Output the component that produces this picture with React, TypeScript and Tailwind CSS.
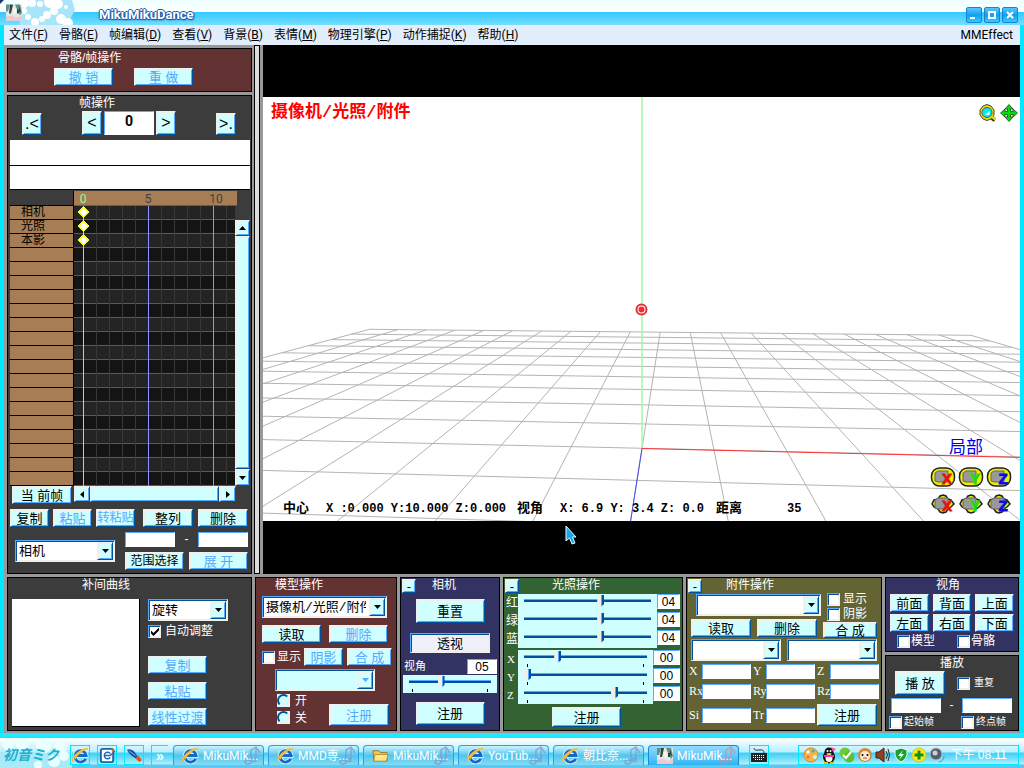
import React, { useId } from 'react';
import clsx from 'clsx';

const bevel =
  'border border-t-[#f0f0f0] border-l-[#f0f0f0] border-r-[#00509c] border-b-[#00509c] bg-[#cfffff] shadow-[inset_1px_1px_0_#efefe8,inset_-1px_-1px_0_#55a9ff]';
const sunken =
  'border border-t-[#55a9ff] border-l-[#55a9ff] border-r-[#f0f0e8] border-b-[#f0f0e8] shadow-[inset_1px_1px_0_#00509c,inset_-1px_-1px_0_#f0f0e8]';

function Btn({
  children,
  className = 'w-[59px] h-[18px]',
  textClass = 'text-[13px]',
  disabled,
  label,
}: {
  children: React.ReactNode;
  className?: string;
  textClass?: string;
  disabled?: boolean;
  label?: string;
}) {
  return (
    <button
      disabled={disabled}
      aria-label={label}
      className={clsx(
        'flex shrink-0 items-center justify-center whitespace-nowrap leading-none',
        bevel,
        disabled ? 'text-[#55a9ff]' : 'text-black',
        textClass,
        className,
      )}
    >
      {children}
    </button>
  );
}

function Field({ label, value = '', className = 'w-[50px]' }: { label: string; value?: string; className?: string }) {
  return (
    <input
      aria-label={label}
      defaultValue={value}
      className={clsx(
        'h-[15px] shrink-0 border border-t-[#55a9ff] border-l-[#55a9ff] border-r-white border-b-white bg-white text-center text-xs leading-none text-black',
        className,
      )}
    />
  );
}

function Select({
  label,
  options = [''],
  className,
  disabled,
}: {
  label: string;
  options?: string[];
  className: string;
  disabled?: boolean;
}) {
  return (
    <div className={clsx('relative h-[22px] shrink-0', className)}>
      <select
        aria-label={label}
        disabled={disabled}
        className={clsx(
          'h-full w-full appearance-none pr-5 pl-[3px] font-[Liberation_Mono,Noto_Sans_CJK_SC,monospace] text-[13px] leading-none text-black',
          sunken,
          disabled ? 'bg-[#cfffff]' : 'bg-white',
        )}
      >
        {options.map((o) => (
          <option key={o}>{o}</option>
        ))}
      </select>
      <span className={clsx('pointer-events-none absolute top-[2px] right-[2px] bottom-[2px] flex w-4 items-center justify-center', bevel)}>
        <svg width="7" height="4" viewBox="0 0 7 4">
          <path d="M0 0h7L3.500 4z" fill={disabled ? '#55a9ff' : '#000'} />
        </svg>
      </span>
    </div>
  );
}

function Check({
  label,
  checked,
  gap = 'gap-px',
  small,
}: {
  label: string;
  checked?: boolean;
  gap?: string;
  small?: boolean;
}) {
  const id = useId();
  return (
    <div className={clsx('flex h-[14px] shrink-0 items-center', gap)}>
      <span className="relative flex size-[13px] shrink-0">
        <input id={id} type="checkbox" defaultChecked={checked} className={clsx('peer size-[13px] appearance-none bg-white', sunken)} />
        <svg viewBox="0 0 13 13" className="pointer-events-none absolute inset-0 hidden peer-checked:block">
          <path d="M3 5.5v3L5.5 11 11 5.500v-3L5.500 8z" fill="#000" />
        </svg>
      </span>
      <label htmlFor={id} className={clsx('whitespace-nowrap leading-[14px]', small ? 'text-[10px]' : 'text-xs')}>
        {label}
      </label>
    </div>
  );
}

function Radio({ label }: { label: string }) {
  const id = useId();
  return (
    <div className="flex h-[17px] items-center gap-[5px]">
      <span className="flex size-[13px] bg-[#cfffff]">
        <input
          id={id}
          type="radio"
          name="display"
          className="size-[13px] appearance-none rounded-full border-2 border-t-[#00509c] border-l-[#00509c] border-r-[#f0f0e8] border-b-[#f0f0e8]"
        />
      </span>
      <label htmlFor={id} className="text-xs leading-[14px]">{label}</label>
    </div>
  );
}

function Range({ label, value, ticks }: { label: string; value: number; ticks?: boolean }) {
  return (
    <div className="flex h-[18px] min-w-0 flex-1 flex-col bg-[#cfffff] px-[6px]">
      <input
        type="range"
        aria-label={label}
        defaultValue={value}
        className="h-[14px] w-full appearance-none bg-[linear-gradient(transparent_5px,#55a9ff_5px,#55a9ff_6px,#00509c_6px,#00509c_8px,transparent_8px)] [&::-webkit-slider-thumb]:h-[12px] [&::-webkit-slider-thumb]:w-[7px] [&::-webkit-slider-thumb]:appearance-none [&::-webkit-slider-thumb]:bg-[linear-gradient(90deg,#efefe8_4px,#55a9ff_4px,#55a9ff_5px,#00509c_5px)] [&::-webkit-slider-thumb]:[clip-path:polygon(0_0,100%_0,100%_75%,50%_100%,0_75%)]"
      />
      {ticks && (
        <span className="flex justify-between px-[3px]">
          <i className="h-[3px] w-px bg-black" />
          <i className="h-[3px] w-px bg-black" />
        </span>
      )}
    </div>
  );
}

function Panel({
  title,
  titleClass = 'text-center',
  className,
  collapsible,
  children,
}: {
  title: string;
  titleClass?: string;
  className: string;
  collapsible?: boolean;
  children: React.ReactNode;
}) {
  return (
    <section className={clsx('relative flex min-w-0 flex-col border border-black text-white', className)}>
      {collapsible && (
        <div className="absolute top-px left-px">
          <Btn label={`${title} -`} className="size-[14px]">-</Btn>
        </div>
      )}
      <h2 className={clsx('h-[15px] text-xs leading-[14px]', titleClass)}>{title}</h2>
      {children}
    </section>
  );
}

const menus = [
  ['文件', 'F'], ['骨骼', 'E'], ['帧编辑', 'D'], ['查看', 'V'], ['背景', 'B'],
  ['表情', 'M'], ['物理引擎', 'P'], ['动作捕捉', 'K'], ['帮助', 'H'],
];

function MikuFace({ className }: { className: string }) {
  return (
    <svg viewBox="0 0 16 16" className={className}>
      <rect width="16" height="16" fill="#dfe9e6" />
      <path d="M0 0h4L2 7H0zM9 0h5l2 8-2 3-3-6z" fill="#668f89" />
      <path d="M4 0h3L5 9H3zM13 1l2 7-2-1z" fill="#31443f" />
      <path d="M7 4h3v5H7z" fill="#fff2e8" />
      <path d="M11 5h2v4h-2z" fill="#174f47" />
      <path d="M0 12l6-1 4 2 6-2v5H0z" fill="#f1c6ce" />
    </svg>
  );
}

function TitleBar() {
  return (
    <header className="relative flex h-[25px] items-center justify-between overflow-hidden bg-[linear-gradient(#f0ffff_0,#fbffff_12px,#35c8ff_12px,#55d4ff_19px,#74deff_25px)] pr-[6px]">
      <svg className="absolute top-0 left-0" width="90" height="25" viewBox="0 0 90 25">
        <path d="M0 0h4L0 4z" fill="#223a68" />
        <path d="M20 0h52l3 10-8 15H20z" fill="#a8e4fa" />
        <g fill="#fff">
          <circle cx="24" cy="3" r="5" /><circle cx="32" cy="3" r="4" /><circle cx="40" cy="4" r="3" />
          <circle cx="50" cy="2" r="6" /><circle cx="58" cy="4" r="5" /><circle cx="24" cy="11" r="3" />
          <circle cx="28" cy="17" r="3" /><circle cx="35" cy="22" r="4" /><circle cx="42" cy="19" r="3" />
          <circle cx="47" cy="15" r="4" /><circle cx="54" cy="11" r="4" /><circle cx="61" cy="19" r="5" />
          <circle cx="68" cy="23" r="5" /><circle cx="66" cy="7" r="2" />
        </g>
      </svg>
      <MikuFace className="relative ml-[6px] h-[17px] w-4" />
      <h1 className="relative mt-[3px] ml-[77px] flex-1 font-[Roboto,sans-serif] text-[13px] leading-none font-bold text-white [text-shadow:1px_0_#2458a8,-1px_0_#2458a8,0_1px_#2458a8,0_-1px_#2458a8,1px_1px_2px_#103878]">
        MikuMikuDance
      </h1>
      <div className="mt-1 flex gap-[2px]">
        {['M3 10h5', 'M4 4h6v6H4z', 'M4 4l6 6M10 4l-6 6'].map((d, i) => (
          <button
            key={d}
            aria-label={['最小化', '最大化', '关闭'][i]}
            className="size-4 rounded-[2px] border border-[#1784cf] bg-linear-to-b from-[#55c5ff] via-[#0aa0f2] to-[#35c9ff]"
          >
            <svg viewBox="0 0 14 14"><path d={d} fill="none" stroke="#fff" strokeWidth="2" /></svg>
          </button>
        ))}
      </div>
    </header>
  );
}

const tracks = ['相机', '光照', '本影'];
const ROW = 14;
const ROWS = 20;

function Timeline() {
  const h = ROW * ROWS;
  return (
    <div className="mr-px ml-[2px] flex pt-px">
      <div className="w-[63px] shrink-0 pt-[14px]">
        <ul className="border-t border-black bg-[#a67d54]">
          {Array.from({ length: ROWS }, (_, i) => (
            <li key={i} className="h-[14px] border-b border-black pl-[11px] text-xs leading-[13px] text-black">
              {tracks[i]}
            </li>
          ))}
        </ul>
      </div>
      <div className="min-w-0 flex-1 border-l border-black">
        <svg width="163" height={h + 15} viewBox={`0 0 163 ${h + 15}`} className="block max-w-none" shapeRendering="crispEdges">
          <rect width="163" height="14" fill="#a67d54" />
          <rect y="14" width="163" height="1" fill="#994a1c" />
          <g fontSize="12" fontFamily="Roboto" textAnchor="middle">
            <text x="9" y="12" fill="#90ff90">0</text>
            <text x="74" y="12" fill="#404040">5</text>
            <text x="142" y="12" fill="#404040">10</text>
          </g>
          {Array.from({ length: ROWS }, (_, i) => (
            <g key={i}>
              <rect y={15 + i * ROW} width="161" height="13" fill={i % 2 ? '#141414' : '#242424'} />
              <rect y={28 + i * ROW} width="161" height="1" fill="#a04510" />
            </g>
          ))}
          {Array.from({ length: 12 }, (_, i) => (
            <rect
              key={i}
              x={9 + i * 13}
              y="15"
              width="1"
              height={h}
              fill={i === 0 ? '#90ee90' : i === 5 || i === 10 ? '#9090ff' : '#383838'}
            />
          ))}
          {[21, 35, 49].map((y) => (
            <path key={y} d={`M9.5 ${y - 5}l5 5-5 5-5-5z`} fill="#fff" stroke="#ff0" />
          ))}
        </svg>
      </div>
      <div className="flex w-[15px] shrink-0 flex-col pt-[29px]">
        <Btn label="向上" className="h-4 w-[15px]">
          <svg width="7" height="4"><path d="M0 4h7L3.500 0z" /></svg>
        </Btn>
        <div className={clsx('flex-1', bevel)} />
        <Btn label="向下" className="h-[17px] w-[15px]">
          <svg width="7" height="4"><path d="M0 0h7L3.500 4z" /></svg>
        </Btn>
      </div>
    </div>
  );
}

function Sidebar() {
  return (
    <aside className="flex w-[245px] shrink-0 flex-col gap-[3px] pt-[3px]">
      <section className="h-[44px] border border-black bg-[#633333] text-white">
        <h2 className="pt-[2px] pl-[50px] text-xs leading-[15px]">骨骼/帧操作</h2>
        <div className="mt-[2px] ml-[46px] flex gap-[21px]">
          <Btn disabled>撤 销</Btn>
          <Btn disabled>重 做</Btn>
        </div>
      </section>
      <section className="flex flex-1 flex-col border border-black bg-[#3c3c3c] text-white">
        <h2 className="pl-[71px] text-xs leading-[14px]">帧操作</h2>
        <div className="mt-px flex items-center pl-[14px]">
          <Btn className="mt-[2px] h-[22px] w-5" textClass="text-base">.&lt;</Btn>
          <Btn className="ml-10 h-6 w-5" textClass="text-base">&lt;</Btn>
          <input
            aria-label="帧"
            defaultValue="0"
            className="ml-[2px] h-6 w-[50px] border border-t-[#55a9ff] border-l-[#55a9ff] border-r-white border-b-white bg-white pb-1 text-center font-[Roboto,sans-serif] text-sm leading-none font-bold text-black"
          />
          <Btn className="ml-[2px] h-6 w-5" textClass="text-base">&gt;</Btn>
          <Btn className="mt-[2px] ml-10 h-[22px] w-5" textClass="text-base">&gt;.</Btn>
        </div>
        <div className="mt-[5px] mr-px ml-[2px] h-[26px] border-b border-black bg-white" />
        <div className="mr-px ml-[2px] h-[24px] border-b border-black bg-white" />
        <Timeline />
        <div className="flex gap-[2px] pl-1">
          <Btn className="h-[18px] w-[60px]">当 前帧</Btn>
          <div className="flex w-[162px]">
            <Btn label="向左" className="h-4 w-4">
              <svg width="4" height="7"><path d="M4 0v7L0 3.500z" /></svg>
            </Btn>
            <div className={clsx('flex-1', 'h-4', bevel)} />
            <Btn label="向右" className="h-4 w-[17px]">
              <svg width="4" height="7"><path d="M0 0v7l4-3.500z" /></svg>
            </Btn>
          </div>
        </div>
        <div className="mt-[5px] flex gap-1 pl-[2px]">
          <Btn className="h-[18px] w-[39px]">复制</Btn>
          <Btn disabled className="h-[18px] w-[39px]">粘贴</Btn>
          <Btn disabled className="h-[18px] w-[39px]" textClass="text-xs">转粘贴</Btn>
          <Btn className="ml-1 h-[18px] w-[50px]">整列</Btn>
          <Btn className="ml-px h-[18px] w-[50px]">删除</Btn>
        </div>
        <div className="mt-[5px] flex pl-[7px]">
          <Select label="对象" options={['相机']} className="mt-2 w-[100px]" />
          <div className="ml-[10px] flex flex-col gap-[5px]">
            <div className="flex justify-between">
              <Field label="起始" />
              <span className="text-xs leading-[15px]">-</span>
              <Field label="结束" />
            </div>
            <div className="flex gap-[5px]">
              <Btn className="h-[18px] w-[59px]" textClass="text-xs">范围选择</Btn>
              <Btn disabled>展 开</Btn>
            </div>
          </div>
        </div>
      </section>
    </aside>
  );
}

// Maps a ground-plane grid node to stage coordinates.
function project(i: number, j: number) {
  const w = 1 - 0.008 * i + 0.13816 * j;
  const x = (66.25 * i + 93.03 * j + 642) / w;
  const y = (-1.945 * i + 34.29 * j + 448.3) / w;
  return `${x.toFixed(1)} ${y.toFixed(1)}`;
}

function Stage() {
  const span = Array.from({ length: 21 }, (_, k) => k - 10);
  const grid = [
    ...span.map((i) => `M${project(i, 10)}L${project(i, -4)}`),
    ...span.filter((j) => j > -4).map((j) => `M${project(-10, j)}L${project(10, j)}`),
  ].join('');
  return (
    <svg viewBox="263 97 757 424" preserveAspectRatio="xMidYMid slice" className="absolute inset-0 h-full w-full">
      <path d={grid} fill="none" stroke="#b4b4b4" />
      <path d="M642 97V448" stroke="#a0f8a0" strokeWidth="1.500" />
      <path d="M642 448.500L1024 457.500" stroke="#f33" />
      <path d={`M642 448.500L${project(0, -2)}`} stroke="#4848f0" />
      <circle cx="641.500" cy="309.500" r="5" fill="#fff" stroke="#e03038" strokeWidth="2" />
      <circle cx="641.500" cy="309.500" r="3" fill="#f03030" />
    </svg>
  );
}

function Gizmo({ axis, color, move }: { axis: string; color: string; move?: boolean }) {
  return (
    <button aria-label={move ? `${axis} 移动` : `${axis} 旋转`} className="h-[22px] w-[26px]">
      <svg viewBox="0 0 26 22">
        {move ? (
          <path d="M13 2l3 1 2 3 3 1 3 4-3 3-3 2-2 3-3 1-3-1-2-3-4-2-2-3 2-4 4-1 2-3z" fill="#ee0" stroke="#222" strokeWidth="1.500" />
        ) : (
          <rect x="1.500" y="2" width="23" height="18" rx="8" fill="#ee0" stroke="#222" strokeWidth="1.500" />
        )}
        <path d="M5 7l3-2h10v11H8l-3-1z" fill="#999" stroke="#666" />
        <text x="17" y="18" fontSize="15" fontWeight="bold" textAnchor="middle" fill={color} stroke={color} strokeWidth=".8" fontFamily="Liberation Sans">
          {axis}
        </text>
      </svg>
    </button>
  );
}

const axes = [
  { axis: 'X', color: '#e81010' },
  { axis: 'Y', color: '#10e010' },
  { axis: 'Z', color: '#0808e8' },
];

function Viewport() {
  return (
    <div className="relative flex min-w-0 flex-1 flex-col bg-black pt-[52px] pb-[53px]">
      <div className="relative flex flex-1 flex-col justify-between overflow-hidden bg-white">
        <Stage />
        <div className="relative flex items-start justify-between pt-[6px] pr-[2px] pl-2">
          <p className="font-[Liberation_Mono,Noto_Sans_CJK_SC,monospace] text-[17px] leading-5 font-bold text-[#f00]">
            摄像机/光照/附件
          </p>
          <div className="flex gap-[2px]">
            <button aria-label="缩放">
              <svg width="20" height="20" viewBox="0 0 20 20">
                <path d="M14 15l3 2" stroke="#222" strokeWidth="4" />
                <path d="M5 3l4-1.500L13 3l3 4v5l-3 4-4 1.500L5 16l-3-4V7z" fill="#ed0" stroke="#444" />
                <circle cx="9" cy="9.500" r="5" fill="#0ee" stroke="#555" />
                <path d="M14 14l3.500 2.500" stroke="#ed0" strokeWidth="2.500" />
                <path d="M7 12l4.500-4v4z" fill="#cff" />
              </svg>
            </button>
            <button aria-label="平移">
              <svg width="18" height="20" viewBox="0 0 18 20">
                <path
                  d="M9 1.500l4 4.500h-2.500v2.500H13V6l4.500 4-4.500 4v-2.500h-2.500V14H13l-4 4.500L5 14h2.500v-2.500H5V14L.5 10 5 6v2.500h2.500V6H5z"
                  fill="#0d0"
                  stroke="#264026"
                  strokeWidth=".8"
                />
              </svg>
            </button>
          </div>
        </div>
        <div className="relative flex items-end justify-between pr-2 pl-5">
          <p className="flex items-center pb-1 font-[Liberation_Mono,Noto_Sans_CJK_SC,monospace] text-xs leading-4 font-bold whitespace-pre text-black">
            <span className="w-[43px] text-[13px]">中心</span>
            <span className="w-[191px]">X :0.000 Y:10.000 Z:0.000</span>
            <span className="w-[43px] text-[13px]">视角</span>
            <span className="w-[156px]">X: 6.9 Y: 3.4 Z: 0.0</span>
            <span className="w-[71px] text-[13px]">距离</span>
            <span>35</span>
          </p>
          <div className="pb-[6px]">
            <p className="mb-2 pl-[19px] font-[Liberation_Serif,Noto_Sans_CJK_SC,serif] text-[17px] leading-5 text-[#0000e0]">局部</p>
            <div className="grid grid-cols-3 gap-x-[2px] gap-y-[5px]">
              {axes.map((a) => <Gizmo key={a.axis} {...a} />)}
              {axes.map((a) => <Gizmo key={a.axis} {...a} move />)}
            </div>
          </div>
        </div>
      </div>
      <svg className="absolute top-[480px] left-[302px]" width="12" height="20" viewBox="0 0 12 20">
        <path d="M1 1v15l3.500-3 2.500 6 3-1-2.500-6H11z" fill="#18a8e8" stroke="#e8faff" />
      </svg>
    </div>
  );
}

function CurvePanel() {
  return (
    <Panel title="补间曲线" titleClass="pl-[74px]" className="bg-[#3c3c3c]">
      <div className="mt-[6px] flex gap-2 pb-[3px] pl-1">
        <div className="size-[128px] border-r border-b border-black bg-white" />
        <div className="flex flex-col">
          <Select label="曲线" options={['旋转']} className="w-20" />
          <div className="mt-[3px]"><Check label="自动调整" checked gap="gap-1" /></div>
          <div className="mt-[18px] flex flex-col gap-2">
            <Btn disabled>复制</Btn>
            <Btn disabled>粘贴</Btn>
            <Btn disabled>线性过渡</Btn>
          </div>
        </div>
      </div>
    </Panel>
  );
}

function ModelPanel() {
  return (
    <Panel title="模型操作" titleClass="pl-[19px]" className="bg-[#633333]">
      <div className="mt-[3px] flex flex-col pl-[6px]">
        <Select label="模型" options={['摄像机/光照/附件']} className="w-[125px]" />
        <div className="mt-[7px] flex gap-2">
          <Btn>读取</Btn>
          <Btn disabled>删除</Btn>
        </div>
        <div className="mt-[5px] flex items-center">
          <Check label="显示" gap="gap-[2px]" />
          <Btn disabled className="ml-[3px] h-[18px] w-[39px]">阴影</Btn>
          <Btn disabled className="ml-1 h-[18px] w-[45px]">合 成</Btn>
        </div>
        <Select label="表示枠" disabled className="mt-[3px] ml-[13px] w-[100px]" />
        <div className="mt-px flex items-end">
          <fieldset className="ml-[15px] w-[52px]">
            <Radio label="开" />
            <Radio label="关" />
          </fieldset>
          <Btn disabled className="h-[22px] w-[60px]">注册</Btn>
        </div>
      </div>
    </Panel>
  );
}

function CameraPanel() {
  return (
    <Panel title="相机" titleClass="pl-[31px]" className="bg-[#333363]" collapsible>
      <div className="mt-[6px] flex flex-col items-center">
        <Btn className="h-6 w-[69px]">重置</Btn>
        <button aria-pressed="true" className={clsx('mt-[10px] h-5 w-20 bg-[#f0f0fa] text-[13px] leading-none text-black', sunken)}>
          透视
        </button>
        <label className="mt-[6px] flex w-full items-center justify-between pr-[2px] pl-[3px] text-[11px] leading-[15px]">
          视角
          <Field label="视角" value="05" className="w-[30px]" />
        </label>
        <div className="mt-px flex w-full px-[2px]">
          <Range label="视角滑块" value={38} ticks />
        </div>
        <Btn className="mt-[9px] h-[23px] w-[69px]">注册</Btn>
      </div>
    </Panel>
  );
}

const colors: [string, number][] = [['红', 61], ['绿', 61], ['蓝', 61]];
const directions: [string, number][] = [['X', 26], ['Y', 0], ['Z', 75]];

function LightPanel() {
  return (
    <Panel title="光照操作" titleClass="pl-12" className="bg-[#336333]" collapsible>
      <div className="mt-px flex flex-col pr-[2px] pl-[2px]">
        {colors.map(([name, v]) => (
          <div key={name} className="flex items-start text-xs">
            <span className="w-3 shrink-0 leading-[18px]">{name}</span>
            <Range label={name} value={v} />
            <Field label={`${name} 值`} value="04" className="w-[23px]" />
          </div>
        ))}
        <div className="mt-[2px]">
          {directions.map(([name, v]) => (
            <div key={name} className="flex items-start">
              <span className="w-3 shrink-0 pl-px font-[Liberation_Serif,serif] text-[11px] leading-[18px]">{name}</span>
              <Range label={name} value={v} ticks />
              <Field label={`${name} 值`} value="00" className="w-[27px]" />
            </div>
          ))}
        </div>
        <Btn className="mt-[3px] ml-[46px] h-5 w-[69px]">注册</Btn>
      </div>
    </Panel>
  );
}

function Coord({ label }: { label: string }) {
  return (
    <label className="flex items-center font-[Liberation_Serif,serif] text-xs leading-[15px]">
      <span className="w-[13px] shrink-0">{label}</span>
      <Field label={label} className="w-[49px]" />
    </label>
  );
}

function AccessoryPanel() {
  return (
    <Panel title="附件操作" titleClass="pl-[39px]" className="bg-[#636333]" collapsible>
      <div className="-mt-px flex flex-col pl-[2px]">
        <div className="flex pl-[7px]">
          <Select label="附件" className="mt-[2px] w-[125px]" />
          <div className="ml-[6px] flex flex-col gap-px">
            <Check label="显示" gap="gap-[3px]" />
            <Check label="阴影" gap="gap-[3px]" />
          </div>
        </div>
        <div className="-mt-[2px] flex pl-[2px]">
          <Btn className="h-[18px] w-[60px]">读取</Btn>
          <Btn className="ml-[6px] h-[18px] w-[60px]">删除</Btn>
          <Btn className="mt-[3px] ml-[6px] h-4 w-[54px]">合 成</Btn>
        </div>
        <div className="mt-px flex gap-[6px] pl-[2px]">
          <Select label="模型" className="w-[90px]" />
          <Select label="骨骼" className="w-[90px]" />
        </div>
        <div className="mt-[3px] grid grid-cols-[64px_64px_62px] gap-y-[5px]">
          {['X', 'Y', 'Z', 'Rx', 'Ry', 'Rz', 'Si', 'Tr'].map((n) => <Coord key={n} label={n} />)}
          <Btn className="h-[22px] w-[60px]">注册</Btn>
        </div>
      </div>
    </Panel>
  );
}

function ViewPanel() {
  return (
    <Panel title="视角" titleClass="text-center pr-2" className="bg-[#333363]">
      <div className="mt-px grid grid-cols-3 gap-x-1 gap-y-[2px] px-1">
        {['前面', '背面', '上面', '左面', '右面', '下面'].map((v) => (
          <Btn key={v} className="h-[18px]">{v}</Btn>
        ))}
      </div>
      <div className="mt-[2px] flex justify-between pr-[23px] pb-[3px] pl-[11px]">
        <Check label="模型" />
        <Check label="骨骼" />
      </div>
    </Panel>
  );
}

function PlayPanel() {
  return (
    <Panel title="播放" titleClass="text-center" className="flex-1 bg-[#3c3c3c]">
      <div className="flex items-center pl-[9px]">
        <Btn className="h-6 w-[50px]">播 放</Btn>
        <div className="ml-3"><Check label="重复" gap="gap-1" small /></div>
      </div>
      <div className="mt-[3px] flex justify-between pr-[6px] pl-[5px]">
        <Field label="起始帧" />
        <span className="text-xs leading-[15px]">-</span>
        <Field label="终点帧" />
      </div>
      <div className="mt-[2px] flex justify-between pr-3 pl-[3px]">
        <Check label="起始帧" gap="gap-[2px]" small />
        <Check label="终点帧" gap="gap-[2px]" small />
      </div>
    </Panel>
  );
}

function IE() {
  return (
    <svg viewBox="0 0 18 18" className="size-[17px] shrink-0">
      <path d="M14.500 12.500a6 6 0 1 1 .5-3.500H5" fill="none" stroke="#e6fbff" strokeWidth="4.500" />
      <path d="M14.500 12.500a6 6 0 1 1 .5-3.500H5" fill="none" stroke="#1768c8" strokeWidth="3" />
      <path d="M1 16C-1 11 10 1 17 2c-5 0-13 7-14 11" fill="none" stroke="#f5bd35" strokeWidth="1.500" />
    </svg>
  );
}

function Folder() {
  return (
    <svg viewBox="0 0 18 18" className="size-[17px] shrink-0">
      <path d="M1 4h6l2 2h7v9H2z" fill="#f2c84c" stroke="#9b7420" />
      <path d="M3 8h14l-2 7H2z" fill="#ffe98c" stroke="#b99032" />
    </svg>
  );
}

const tasks = [
  { label: 'MikuMik...', icon: <IE /> },
  { label: 'MMD専...', icon: <IE /> },
  { label: 'MikuMik...', icon: <Folder /> },
  { label: 'YouTub...', icon: <IE /> },
  { label: '朝比奈...', icon: <IE /> },
  { label: 'MikuMik...', icon: <MikuFace className="size-4 shrink-0" />, active: true },
];

function Note({ active }: { active?: boolean }) {
  return (
    <svg viewBox="0 0 20 20" className="absolute top-0 right-0 size-5" stroke={active ? '#c98d9d' : '#7c96c8'} fill="none" strokeWidth="1.500" opacity=".7">
      <path d="M8 15V4l5-3 4 6M13 1v12" />
      <ellipse cx="5" cy="16" rx="3" ry="2" />
      <ellipse cx="11" cy="14" rx="2" ry="1.500" />
    </svg>
  );
}

function Tray() {
  return (
    <div className="ml-auto flex h-5 items-center gap-[2px] border border-[#00e8ff] pr-[11px] pl-1">
      <svg width="16" height="16" viewBox="0 0 16 16">
        <circle cx="8" cy="8" r="7" fill="#f5b743" stroke="#c98a30" />
        <circle cx="5" cy="5" r="1.500" fill="#fff" /><circle cx="10" cy="4" r="1.500" fill="#3ad" /><circle cx="5" cy="10" r="1.500" fill="#e66" />
        <circle cx="12" cy="10" r="2" fill="#c8f3ff" />
      </svg>
      <svg width="16" height="17" viewBox="0 0 16 17">
        <ellipse cx="8" cy="10" rx="6" ry="6.500" fill="#111" /><circle cx="8" cy="5" r="4.500" fill="#111" />
        <ellipse cx="8" cy="11" rx="3.500" ry="4" fill="#fff" /><path d="M5 6h6L8 8z" fill="#fb0" />
        <circle cx="6.500" cy="4" r="1" fill="#fff" /><circle cx="9.500" cy="4" r="1" fill="#fff" />
        <path d="M3 8h10v2H3z" fill="#f3a" /><path d="M10 0l5 2-3 3z" fill="#f5a" /><path d="M3 15h4v2H3zM9 15h4v2H9z" fill="#fb0" />
      </svg>
      <svg width="16" height="16" viewBox="0 0 16 16">
        <circle cx="6" cy="6" r="5.500" fill="#6dc938" /><circle cx="10" cy="10" r="5.500" fill="#5dc030" />
        <path d="M4 8l3 3 5-6" stroke="#fff" strokeWidth="2" fill="none" />
      </svg>
      <svg width="16" height="16" viewBox="0 0 16 16">
        <circle cx="8" cy="8" r="7" fill="#d68a3c" /><ellipse cx="8" cy="9" rx="5" ry="5" fill="#ffe9cc" />
        <circle cx="5.500" cy="8" r="1" /><circle cx="10.500" cy="8" r="1" /><path d="M6 11h4" stroke="#b44" />
      </svg>
      <svg width="16" height="16" viewBox="0 0 16 16">
        <path d="M1 5h3l5-4v14l-5-4H1z" fill="#9c3a20" stroke="#421" /><path d="M11 4q3 4 0 8M13 2q3 6 0 12" stroke="#421" fill="none" />
      </svg>
      <svg width="16" height="16" viewBox="0 0 16 16">
        <path d="M8 1l6 2v5q-1 5-6 7-5-2-6-7V3z" fill="#19a030" stroke="#e8ffe8" /><path d="M10 3L5 9h3l-2 4 5-6H8z" fill="#fff" />
      </svg>
      <svg width="16" height="16" viewBox="0 0 16 16">
        <circle cx="8" cy="8" r="7" fill="#ffe81c" stroke="#c8c820" /><path d="M8 3.500v9M3.500 8h9" stroke="#159018" strokeWidth="3" />
      </svg>
      <svg width="16" height="16" viewBox="0 0 16 16">
        <circle cx="7" cy="7" r="6" fill="#555f68" stroke="#bbb" /><circle cx="6" cy="6" r="2.500" fill="#ccd" /><path d="M10 15q5-1 5-6" fill="none" stroke="#6689cc" />
      </svg>
      <time className="ml-1 text-xs leading-none whitespace-nowrap text-white">下午 08:11</time>
    </div>
  );
}

function Taskbar() {
  const quick = [
    <IE />,
    <svg viewBox="0 0 18 18" className="size-[17px]">
      <rect x="2" y="2" width="13" height="14" rx="2" fill="#fff" stroke="#1768a8" strokeWidth="2" />
      <path d="M12 11a3.500 3.500 0 1 1 0-4M6 9h6l5-5" fill="none" stroke="#2068b8" strokeWidth="1.500" />
      <path d="M13 2l3 2-2 2z" fill="#f70" />
    </svg>,
    <svg viewBox="0 0 18 18" className="size-[17px]">
      <path d="M1 3q4-2 8 2l4 6-3 1Q3 8 1 3z" fill="#174fa0" />
      <path d="M10 12l3-3 4 5-3 2z" fill="#e85220" />
      <path d="M3 4l7 5" stroke="#79bdf0" />
    </svg>,
  ];
  return (
    <footer className="relative flex h-[30px] items-center overflow-hidden bg-[linear-gradient(#fff_0,#d4f6ff_8px,#b8efff_14px,#3ed0f5_15px,#6cdcf8_20px,#b0effd_26px,#5cc8f0_27px)] pt-1 pr-[5px]">
      <svg className="absolute top-0 left-0" width="72" height="30" viewBox="0 0 72 30">
        <path d="M0 14h72v16H0z" fill="#a8eaf8" />
        <g fill="#eaffff">
          <circle cx="8" cy="6" r="6" /><circle cx="22" cy="5" r="7" /><circle cx="44" cy="7" r="8" /><circle cx="60" cy="10" r="7" />
          <circle cx="54" cy="23" r="6" /><circle cx="38" cy="27" r="4" /><circle cx="64" cy="18" r="5" />
        </g>
      </svg>
      <button className="relative w-[70px] pl-[3px] text-left text-sm leading-6 font-bold whitespace-nowrap text-[#20b0d0] italic">
        初音ミク
      </button>
      <div className="relative flex gap-[7px]">
        {quick.map((q, i) => (
          <button key={i} aria-label={['浏览器', '邮件', '桌面'][i]} className="flex size-5 items-center justify-center border border-[#00e8ff]">
            {q}
          </button>
        ))}
        <button className="h-5 w-[17px] border-t border-l border-[#00e8ff] text-sm leading-4 font-bold text-white">»</button>
      </div>
      <nav className="ml-[5px] flex gap-1">
        {tasks.map((t, i) => (
          <button
            key={i}
            className={clsx(
              'relative flex h-5 w-[91px] items-center gap-1 overflow-hidden rounded-t-[4px] border border-b-0 pl-2 font-[Roboto,Noto_Sans_CJK_JP,sans-serif] text-xs leading-none whitespace-nowrap text-white',
              t.active
                ? 'border-[#148cdc] bg-linear-to-b from-[#8fdcff] to-[#25b5f2]'
                : 'border-[#2e9fe6] bg-linear-to-b from-[#c8f4ff] via-[#51c5ec] to-[#82dcf6]',
            )}
          >
            <Note active={t.active} />
            {t.icon}
            <span className="relative">{t.label}</span>
          </button>
        ))}
      </nav>
      <button aria-label="输入法" className="ml-[10px] flex size-5 items-center justify-center border border-[#00e8ff]">
        <svg width="16" height="14" viewBox="0 0 16 14">
          <path d="M3 0q0 3 5 2t5 3" fill="none" stroke="#333" />
          <rect y="5" width="16" height="9" fill="#222" />
          <path d="M2 7.500h12M2 9.500h12M4 11.500h8" stroke="#fff" strokeDasharray="1 1" />
        </svg>
      </button>
      <Tray />
    </footer>
  );
}

export default function App() {
  return (
    <div className="flex min-h-screen flex-col bg-[#00e8ff] font-[Liberation_Sans,Noto_Sans_CJK_SC,sans-serif] text-xs">
      <TitleBar />
      <nav className="mx-1 flex h-5 items-center bg-[#e3eefd] pr-[7px] pl-[5px] font-[Roboto,Noto_Sans_CJK_SC,sans-serif] leading-none text-black">
        <div className="flex flex-1 gap-[11px]">
          {menus.map(([name, key]) => (
            <button key={name} className="whitespace-nowrap">
              {name}(<u>{key}</u>)
            </button>
          ))}
        </div>
        <button>MMEffect</button>
      </nav>
      <main className="mx-1 flex flex-1 flex-col gap-[3px] bg-[#999] pb-[2px]">
        <div className="flex flex-1 pl-[3px]">
          <Sidebar />
          <div className="mr-[3px] ml-[2px] w-[6px] shrink-0 border border-black bg-[#dcdcdc]" />
          <Viewport />
        </div>
        <div className="grid grid-cols-[245px_142fr_100fr_180fr_196fr_134fr] gap-[3px] pr-px pl-[3px]">
          <CurvePanel />
          <ModelPanel />
          <CameraPanel />
          <LightPanel />
          <AccessoryPanel />
          <div className="flex flex-col gap-[3px]">
            <ViewPanel />
            <PlayPanel />
          </div>
        </div>
      </main>
      <div className="h-[5px] bg-linear-to-b from-[#2fe4ff] to-[#00f0ff]" />
      <Taskbar />
    </div>
  );
}
